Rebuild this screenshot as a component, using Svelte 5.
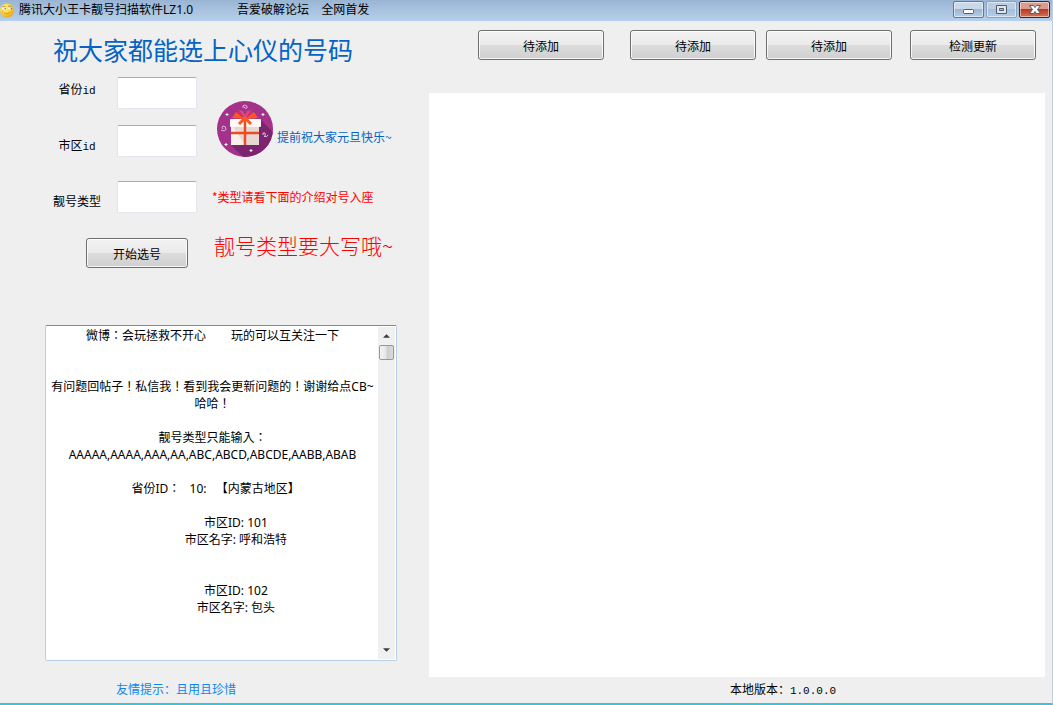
<script>
  let province = '';
  let city = '';
  let numberType = '';
  let results = '';
  let memoBox;

  const version = '1.0.0.0';
  const indent = ' '.repeat(15);

  const memo = [
    '微博：会玩拯救不开心        玩的可以互关注一下',
    '',
    '',
    '有问题回帖子！私信我！看到我会更新问题的！谢谢给点CB~哈哈！',
    '',
    '靓号类型只能输入：',
    'AAAAA,AAAA,AAA,AA,ABC,ABCD,ABCDE,AABB,ABAB',
    '',
    '  省份ID：   10:   【内蒙古地区】',
    '',
    indent + '市区ID: 101',
    indent + '市区名字: 呼和浩特',
    '',
    '',
    indent + '市区ID: 102',
    indent + '市区名字: 包头',
    ''
  ].join('\n');

  const scrollMemo = (lines) => {
    memoBox.scrollTop += lines * 17;
  };
</script>

<div class="window">
  <header class="titlebar">
    <svg class="app-icon" viewBox="0 0 16 16" aria-hidden="true">
      <defs>
        <radialGradient id="face" cx="0.35" cy="0.3" r="0.8">
          <stop offset="0" stop-color="#fff3a0" />
          <stop offset="0.5" stop-color="#fbd63c" />
          <stop offset="1" stop-color="#e79b10" />
        </radialGradient>
      </defs>
      <circle cx="7.5" cy="8" r="7.5" fill="url(#face)" />
      <path d="M2.500 4q2-1 3.500 0M8.500 3.500q2-1 4 .5" fill="none" stroke="#b07a1c" stroke-width="0.800" />
      <path d="M2.500 6h3.500M9 6h3.500" stroke="#fff" stroke-width="1.500" />
      <path d="M5 6h1M11.500 6h1" stroke="#5a3a08" stroke-width="1.200" />
      <path d="M4 10.500q3.500 2.500 7-.5" fill="none" stroke="#d08a18" stroke-width="0.800" />
      <circle cx="2.500" cy="9" r="1" fill="#f8b04b" />
      <circle cx="12.500" cy="9" r="1" fill="#f8b04b" />
    </svg>
    <span class="title">腾讯大小王卡靓号扫描软件LZ1.0</span>
    <span class="forum">吾爱破解论坛</span>
    <span>全网首发</span>
    <div class="window-buttons">
      <button aria-label="最小化">
        <svg viewBox="0 0 29 15"><rect x="9.500" y="7.500" width="10" height="4" rx="1" fill="#fff" stroke="#535c6a" /></svg>
      </button>
      <button class="dim" aria-label="最大化">
        <svg viewBox="0 0 29 15"><path d="M9.500 3.500h10v8h-10zM12.500 6.500v2h4v-2z" fill="#dde5ef" fill-rule="evenodd" stroke="#535c6a" /></svg>
      </button>
      <button class="close" aria-label="关闭">
        <svg viewBox="0 0 29 15"><path d="M9.500 3.500h4l1.500 2 1.500-2h4l-3 4 3 4h-4l-1.500-2-1.500 2h-4l3-4z" fill="#fff" stroke="#535c6a" /></svg>
      </button>
    </div>
  </header>

  <main class="content">
    <section class="left">
      <h1>祝大家都能选上心仪的号码</h1>

      <div class="form">
        <div class="fields">
          <div class="labels">
            <label for="province">省份<span class="mono">id</span></label>
            <label for="city">市区<span class="mono">id</span></label>
            <label for="type">靓号类型</label>
          </div>
          <div class="inputs">
            <input id="province" type="text" bind:value={province} />
            <input id="city" type="text" bind:value={city} />
            <input id="type" class="spaced" type="text" bind:value={numberType} />
          </div>
          <button class="btn start">开始选号</button>
        </div>

        <div class="notes">
          <div class="greeting">
            <svg class="gift" viewBox="0 0 56 56" aria-hidden="true">
              <defs>
                <clipPath id="disc"><circle cx="28" cy="28" r="28" /></clipPath>
              </defs>
              <circle cx="28" cy="28" r="28" fill="#a4318a" />
              <path d="M43 18L62 37V62H32L14 44z" fill="#7c2470" clip-path="url(#disc)" />
              <path d="M15 17l4-6 9 7zM41 17l-4-6-9 7z" fill="#ff5722" />
              <path d="M28 18l-7-9 5 1 2 4 2-4 5-1z" fill="#e0487c" />
              <path d="M20 12l2-3 6 9zM36 12l-2-3-6 9z" fill="#c93070" />
              <rect x="14" y="25" width="28" height="19" fill="#f7f1ee" />
              <path d="M42 25v19H28l-12-18z" fill="#e6d9d3" />
              <rect x="13" y="18" width="31" height="8" rx="1" fill="#fff8f5" />
              <path d="M14 32h28M28 18v26" stroke="#ef4b23" stroke-width="2.500" />
              <path d="M28 17l-6 6M28 17l6 6" stroke="#ff5722" stroke-width="3" />
              <circle cx="28" cy="18" r="2.500" fill="#ff5722" />
              <path d="M10 12v3M8.500 13.500h3M46 12v3M44.500 13.500h3M9 42v3M7.500 43.500h3M34 48v3M32.500 49.500h3" stroke="#fff" />
              <path d="M26 7q-1-3 2-3 3 1 2 3-2 1-3-1M4 29q4 2 5-1 0-3-3-3-2 1 0 3M46 34q-1-3 2-2 1 3-1 4M47 35q3 2 4-1" fill="none" stroke="#e5b9dc" />
            </svg>
            <span>提前祝大家元旦快乐~</span>
          </div>
          <p class="hint">*类型请看下面的介绍对号入座</p>
          <p class="warning">靓号类型要大写哦~</p>
        </div>
      </div>

      <div class="memo">
        <textarea bind:this={memoBox} aria-label="说明" readonly value={memo}></textarea>
        <div class="scrollbar">
          <button aria-label="向上滚动" onclick={() => scrollMemo(-1)}>
            <svg viewBox="0 0 8 4"><path d="M0 4l4-4 4 4z" fill="#3c3c3c" /></svg>
          </button>
          <div class="thumb"></div>
          <button class="down" aria-label="向下滚动" onclick={() => scrollMemo(1)}>
            <svg viewBox="0 0 8 4"><path d="M0 0l4 4 4-4z" fill="#3c3c3c" /></svg>
          </button>
        </div>
      </div>

      <p class="tip">友情提示：且用且珍惜</p>
    </section>

    <section class="right">
      <div class="toolbar">
        <button class="btn">待添加</button>
        <div class="pair">
          <button class="btn">待添加</button>
          <button class="btn">待添加</button>
        </div>
        <button class="btn">检测更新</button>
      </div>
      <textarea class="results" aria-label="结果" readonly value={results}></textarea>
      <p class="version">本地版本：<span class="mono">{version}</span></p>
    </section>
  </main>
</div>

<style>
  :global(body) {
    margin: 0;
  }
  .window {
    display: flex;
    flex-direction: column;
    box-sizing: border-box;
    min-height: 100vh;
    background: #efefef;
    border-right: 1px solid #b6cfee;
    border-bottom: 2px solid #38c5dc;
    font-family: "Noto Sans CJK SC", sans-serif;
    font-size: 12px;
    line-height: 16px;
    color: #000;
  }
  p, h1 {
    margin: 0;
  }
  button, input, textarea {
    box-sizing: border-box;
    margin: 0;
    font-family: inherit;
    font-size: 12px;
  }
  .mono {
    font-family: "Liberation Mono", monospace;
    font-size: 11px;
    line-height: 1;
  }

  .titlebar {
    display: flex;
    align-items: center;
    box-sizing: border-box;
    height: 21px;
    background: linear-gradient(#9ab5d4, #b5cee9);
    border-bottom: 1px solid #b6d0f2;
    font-family: "Noto Sans", "Noto Sans CJK SC", sans-serif;
    white-space: nowrap;
  }
  .app-icon {
    width: 15px;
    height: 15px;
    margin-right: 4px;
  }
  .title {
    margin-right: 44px;
  }
  .forum {
    margin-right: 12px;
  }
  .window-buttons {
    display: flex;
    gap: 2px;
    align-self: flex-start;
    margin: 1px 2px 0 auto;
  }
  .window-buttons button {
    width: 31px;
    height: 17px;
    padding: 0;
    border: 1px solid #64778f;
    border-radius: 2px;
    background: linear-gradient(#c9d9ea 45%, #9db6d1 50%, #b8cfe8);
    box-shadow: inset 0 0 0 1px rgba(255, 255, 255, 0.5);
  }
  .window-buttons svg {
    display: block;
    width: 29px;
    height: 15px;
  }
  .window-buttons .dim {
    border-color: #8ba2bf;
    background: linear-gradient(#b9cde3 45%, #a5bfdb 50%, #b5cde8);
  }
  .window-buttons .close {
    border-color: #4a1e1c;
    background: linear-gradient(#dd9b8c 45%, #b83a25 50%, #d37457);
  }

  .content {
    display: flex;
    flex: 1;
    gap: 32px;
    padding: 0 7px 0 45px;
  }
  .left {
    display: flex;
    flex-direction: column;
    width: 352px;
    flex-shrink: 0;
  }
  h1 {
    padding: 14px 0 14px 8px;
    font-size: 25px;
    font-weight: 400;
    line-height: 28px;
    color: #0563c4;
    white-space: nowrap;
  }

  .form {
    display: flex;
    gap: 15px;
    margin-bottom: 57px;
    white-space: nowrap;
  }
  .fields {
    display: grid;
    grid-template-columns: 64px 80px;
    grid-template-rows: 136px 30px;
    column-gap: 8px;
    row-gap: 25px;
  }
  .labels {
    display: flex;
    flex-direction: column;
    gap: 40px;
    padding-top: 4px;
    text-align: center;
  }
  .labels label {
    height: 16px;
  }
  .inputs {
    display: flex;
    flex-direction: column;
    gap: 16px;
  }
  .inputs input {
    width: 80px;
    height: 32px;
    padding: 2px 4px;
    border: 1px solid #e2e6ee;
    border-top-color: #abadb3;
    border-radius: 2px;
    background: #fff;
  }
  .inputs .spaced {
    margin-top: 8px;
  }
  .btn {
    width: 126px;
    height: 30px;
    padding: 0;
    border: 1px solid #707070;
    border-radius: 3px;
    background: linear-gradient(#f2f2f2, #ebebeb 48%, #dddddd 50%, #cfcfcf);
    box-shadow: inset 0 0 0 1px rgba(255, 255, 255, 0.8);
    color: #000;
  }
  .start {
    grid-column: 1 / -1;
    width: 102px;
    margin-left: 41px;
  }

  .notes {
    padding-top: 24px;
  }
  .greeting {
    display: flex;
    align-items: center;
    gap: 4px;
    padding-left: 5px;
    color: #0563c4;
  }
  .greeting span {
    padding-top: 16px;
  }
  .gift {
    width: 56px;
    height: 56px;
  }
  .hint {
    margin-top: 32px;
    color: #f00;
  }
  .warning {
    margin-top: 28px;
    padding-left: 2px;
    font-size: 21px;
    font-weight: 300;
    line-height: 24px;
    color: #f00;
  }

  .memo {
    display: flex;
    flex: 1;
    box-sizing: border-box;
    min-height: 336px;
    padding: 1px;
    border: 1px solid #b5cfe7;
    border-top-color: #5794bf;
    border-radius: 2px;
    background: #fff;
  }
  .memo textarea {
    flex: 1;
    min-width: 0;
    padding: 0;
    border: none;
    outline: none;
    resize: none;
    overflow-y: auto;
    scrollbar-width: none;
    background: #fff;
    color: #000;
    font-family: "Noto Sans", "Noto Sans CJK TC", sans-serif;
    line-height: 17px;
    text-align: center;
  }
  .scrollbar {
    display: flex;
    flex-direction: column;
    width: 17px;
    background: #f0f0f0;
  }
  .scrollbar button {
    display: flex;
    align-items: center;
    justify-content: center;
    height: 18px;
    padding: 0;
    border: none;
    background: none;
  }
  .scrollbar .down {
    margin-top: auto;
  }
  .scrollbar svg {
    width: 7px;
    height: 4px;
  }
  .thumb {
    box-sizing: border-box;
    width: 15px;
    height: 15px;
    margin-left: 1px;
    border: 1px solid #979797;
    border-radius: 2px;
    background: linear-gradient(90deg, #f4f4f4, #e6e6e6 45%, #cfcfcf 55%, #dadada);
  }
  .tip {
    padding: 20px 0 6px 71px;
    color: #0c87f0;
  }

  .right {
    display: flex;
    flex-direction: column;
    flex: 1;
    min-width: 0;
  }
  .toolbar {
    display: flex;
    justify-content: flex-end;
    padding: 9px 9px 33px 0;
  }
  .pair {
    display: flex;
    gap: 10px;
    margin: 0 18px 0 26px;
  }
  .results {
    flex: 1;
    width: 100%;
    padding: 4px;
    border: none;
    outline: none;
    resize: none;
    background: #fff;
  }
  .version {
    height: 16px;
    padding: 4px 0 6px 92px;
    text-align: center;
  }
</style>
